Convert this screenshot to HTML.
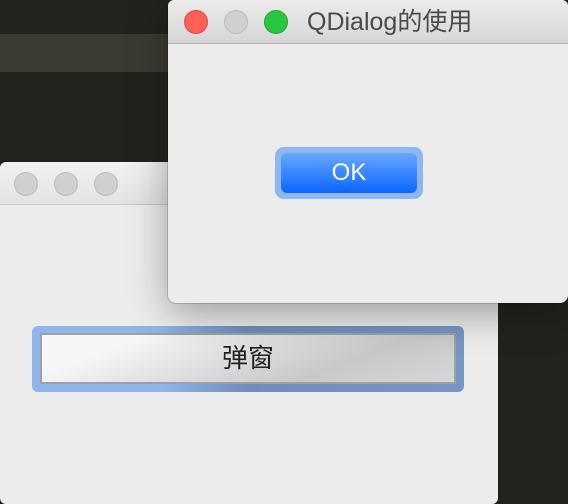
<!DOCTYPE html>
<html><head><meta charset="utf-8"><style>
*{margin:0;padding:0;box-sizing:border-box}
body{width:568px;height:504px;overflow:hidden;background:#23231e;position:relative;font-family:"Liberation Sans","Noto Sans CJK SC",sans-serif}
.band{position:absolute;left:0;top:34px;width:568px;height:38px;background:#3c3b32}
.back{position:absolute;left:0;top:162px;width:498px;height:342px;background:#ececec;border-radius:6px 6px 6px 6px;overflow:hidden}
.back .tb{height:43px;background:linear-gradient(#f2f2f2,#e2e2e2);border-bottom:1px solid #c8c8c8}
.l{position:absolute;width:24px;height:24px;border-radius:50%}
.g{background:#d0d0d0;border:1px solid #bdbdbd}
.dlg{position:absolute;left:168px;top:0;width:400px;height:303px;background:#ececec;border-radius:6px 6px 8px 8px;box-shadow:0 10px 40px rgba(0,0,0,.35),0 0 0 1px rgba(0,0,0,.15);overflow:hidden}
.dlg .tb{height:44px;background:linear-gradient(#ebebeb,#d6d6d6);border-bottom:1px solid #b0b0b0;position:relative}
.title{position:absolute;left:139px;top:7px;font-size:25px;color:#4a4a4a;line-height:30px;white-space:nowrap}
.okr{position:absolute;left:107px;top:147px;width:148px;height:52px;border-radius:9px;background:#8fb6ee}
.ok{position:absolute;left:6px;top:6px;width:136px;height:40px;border-radius:6px;background:linear-gradient(#6aa8ff,#0a66ff);color:#fff;font-size:24px;text-align:center;line-height:40px}
.br{position:absolute;left:32px;top:326px;width:432px;height:66px;border-radius:6px;background:linear-gradient(90deg,#8fb5ea 0%,#8fb5ea 30%,#6d8dba 50%,#7696c4 100%)}
.bi{position:absolute;left:8px;top:7px;width:416px;height:51px;border:2px solid #a0a0a0;background:linear-gradient(160deg,#f6f6f6 20%,#c8c8c8 70%,#d6d6d6);text-align:center;font-size:26px;line-height:46px;color:#222}
</style></head><body>
<div class="band"></div>
<div class="back"><div class="tb"></div>
<div class="l g" style="left:14px;top:10px"></div>
<div class="l g" style="left:54px;top:10px"></div>
<div class="l g" style="left:94px;top:10px"></div>
</div>
<div class="br"><div class="bi">弹窗</div></div>
<div class="dlg"><div class="tb">
<div class="l" style="left:16px;top:10px;background:#fe5f57;border:1px solid #e2463f"></div>
<div class="l g" style="left:56px;top:10px"></div>
<div class="l" style="left:96px;top:10px;background:#28c73f;border:1px solid #1faa2f"></div>
<div class="title">QDialog的使用</div></div>
<div class="okr"><div class="ok">OK</div></div>
</div>
</body></html>
